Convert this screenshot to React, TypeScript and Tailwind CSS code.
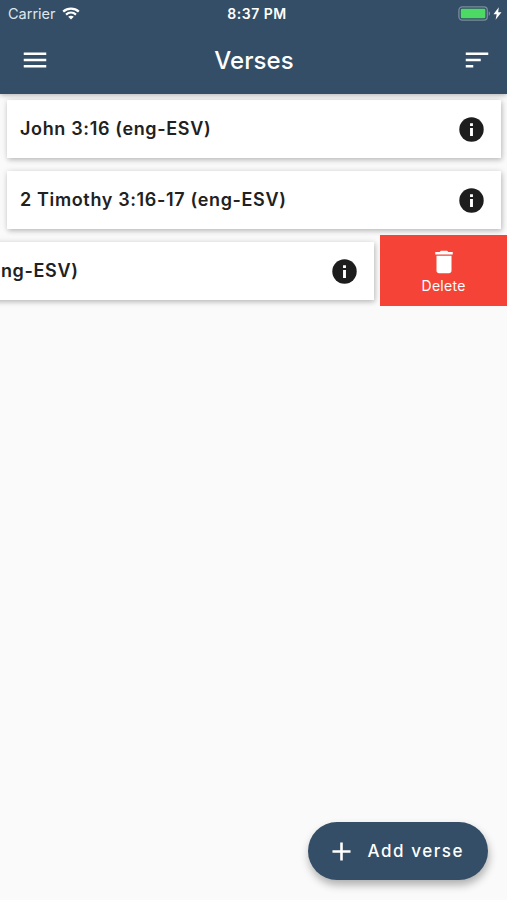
import React from "react";
import { MdMenu, MdSort, MdDelete, MdAdd } from "react-icons/md";

const verses = [
  { title: "John 3:16 (eng-ESV)", open: false },
  { title: "2 Timothy 3:16-17 (eng-ESV)", open: false },
  { title: "Psalm 1:1 (eng-ESV)", open: true },
];

const StatusBar = () => {
  return (
    <div className="grid h-[27px] grid-cols-3 items-center pl-[8px] pr-[5px] text-white">
      <div className="flex items-center gap-[6px] text-[14.5px] text-[#dfe6ec]">
        <span>Carrier</span>
        <svg width="18" height="13" viewBox="0 0 18 13" fill="none">
          <path d="M1.2 4.6C5.6.6 12.4.6 16.8 4.6" stroke="white" strokeWidth="2.3" />
          <path d="M4 7.6c2.9-2.6 7.1-2.6 10 0" stroke="white" strokeWidth="2.2" />
          <path d="M9 12.6 6.2 9.8c1.6-1.4 4-1.4 5.6 0z" fill="white" />
        </svg>
      </div>
      <span className="pl-[4px] text-center text-[14px] font-semibold tracking-[0.5px]">
        8:37 PM
      </span>
      <div className="flex items-center justify-end gap-[2px]">
        <svg width="33" height="15" viewBox="0 0 33 15">
          <rect x="0.9" y="0.9" width="28.4" height="13.2" rx="3.4" fill="none" stroke="#7b8c9e" strokeWidth="1.3" />
          <rect x="2.8" y="2.8" width="24.6" height="9.4" rx="1.2" fill="#4cd964" />
          <path d="M30.7 5.2c1.8.6 1.8 4 0 4.6z" fill="#7b8c9e" />
        </svg>
        <svg width="9" height="13" viewBox="0 0 9 13">
          <path d="M5.8.3.5 7.3h3.2L2.6 12.7 8.5 5.3H5.2z" fill="white" />
        </svg>
      </div>
    </div>
  );
};

const InfoIcon = () => {
  return (
    <svg className="h-[29px] w-[29px]" viewBox="0 0 24 24">
      <circle cx="12" cy="12" r="10.1" fill="#1d1d1d" />
      <path d="M10.8 6.8h2.4v2.2h-2.4zM10.8 10.8h2.4v6.5h-2.4z" fill="white" />
    </svg>
  );
};

const VerseCard = ({ title }: { title: string }) => {
  return (
    <div className="flex h-[58px] items-center justify-between bg-white pl-[13px] pr-[15px] shadow-[1px_2px_5px_rgba(0,0,0,0.22),0_0_8px_rgba(0,0,0,0.08)]">
      <span className="whitespace-nowrap pb-[1px] text-[18px] font-semibold tracking-[0.64px] text-[#212121]">
        {title}
      </span>
      <InfoIcon />
    </div>
  );
};

export default function App() {
  return (
    <div className="flex h-[900px] w-[507px] flex-col overflow-hidden bg-[#fafafa] font-['Inter','Liberation_Sans',sans-serif]">
      <header className="relative z-10 h-[93.5px] shrink-0 bg-[#334e66] shadow-[0_1px_5px_rgba(0,0,0,0.3)]">
        <StatusBar />
        <div className="flex h-[66px] items-center justify-between pl-[20px] pr-[15px] text-white">
          <MdMenu className="h-[30px] w-[30px]" />
          <h1 className="pr-[4px] pt-[1px] text-[24px] font-medium tracking-[0.1px]">Verses</h1>
          <MdSort className="h-[30px] w-[30px]" />
        </div>
      </header>

      {/* Verse list */}
      <main className="-mt-[0.5px] flex-1">
        {verses.map((verse) => (
          <div key={verse.title} className="flex h-[71px] justify-end">
            <div className="w-[507px] shrink-0 pl-[7px] pr-[6px] pt-[7px]">
              <VerseCard title={verse.title} />
            </div>
            {verse.open && (
              <button className="flex h-[71px] w-[126.75px] shrink-0 flex-col items-center justify-center bg-[#f54337] pb-[1px] text-white">
                <MdDelete className="h-[30px] w-[30px]" />
                <span className="text-[14px] leading-[17px] tracking-[0.3px]">Delete</span>
              </button>
            )}
          </div>
        ))}
      </main>

      <footer className="flex justify-end pb-[20px] pr-[19.5px]">
        <button className="flex h-[58px] w-[180px] items-center gap-[11px] rounded-full bg-[#334e66] pl-[18px] text-white shadow-[1px_5px_9px_rgba(0,0,0,0.3)]">
          <MdAdd className="h-[31px] w-[31px]" />
          <span className="pt-[1px] text-[17px] font-medium tracking-[1.55px]">Add verse</span>
        </button>
      </footer>
    </div>
  );
}
